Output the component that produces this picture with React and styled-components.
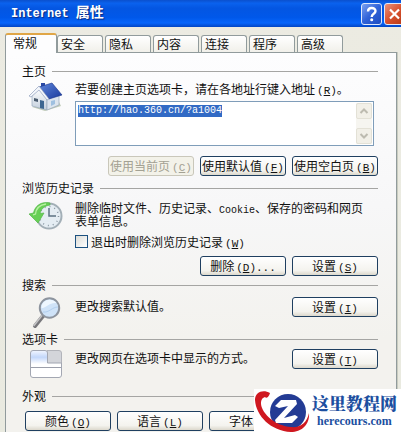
import React, { useEffect, useRef } from "react";
import styled, { createGlobalStyle, css } from "styled-components";

const GlobalStyle = createGlobalStyle`
  * { box-sizing: border-box; }
  html, body { margin: 0; overflow: hidden; }
  body, button, textarea {
    font-family: "Noto Sans CJK SC", sans-serif;
    font-size: 12px;
    line-height: 14px;
    color: #111;
  }
  h1, h2, p { margin: 0; font-size: inherit; font-weight: 400; }
`;

const Dialog = styled.main`
  display: flex;
  flex-direction: column;
  height: 100vh;
  overflow: hidden;
  background: linear-gradient(#ecebe2, #e9eae0);
`;

const TitleBar = styled.header`
  display: flex;
  align-items: center;
  flex: none;
  height: 27px;
  padding-left: 11px;
  overflow: hidden;
  background: linear-gradient(#0b50cd 0%, #0a62ee 12%, #0456e2 30%, #0058ea 65%, #0765fb 85%, #0245c4 100%);
`;

const Title = styled.h1`
  flex: 1;
  font: 700 12px/20px "Liberation Mono", "Noto Sans CJK SC", monospace;
  color: #fff;
  text-shadow: 1px 1px 1px #0a2a80;
  white-space: pre;
`;

const TitleCn = styled.span`
  font-size: 14px;
`;

const Controls = styled.div`
  display: flex;
  gap: 2px;
  margin-right: -4px;
`;

const ControlButton = styled.button`
  width: 21px;
  height: 22px;
  padding: 0;
  border: 1px solid #dfe8fb;
  border-radius: 3px;
  background: ${(p) =>
    p.$close
      ? "linear-gradient(135deg, #e9927b, #d8502d 50%, #b53a17)"
      : "linear-gradient(135deg, #7aa0f0, #2f62d8 50%, #1d4cc0)"};

  svg { display: block; margin: auto; }
`;

const Tabs = styled.div`
  display: flex;
  align-items: flex-end;
  gap: 2px;
  flex: none;
  height: 25px;
  padding-left: 5px;
`;

const Tab = styled.button`
  width: 46px;
  height: 17px;
  padding: 0 0 0 3px;
  text-align: left;
  border: 1px solid #919b9c;
  border-bottom: 0;
  border-radius: 3px 3px 0 0;
  background: linear-gradient(#fff, #f1f0ea);

  ${(p) =>
    p.$active &&
    css`
      z-index: 1;
      width: 52px;
      height: 20px;
      margin-right: -2px;
      margin-bottom: -1px;
      padding: 0 0 2px 7px;
      border-top: 2px solid #e0a647;
      background: #fdfdfe;
    `}
`;

const Panel = styled.div`
  flex: 1;
  margin: 0 4px 0 5px;
  padding: 11px 18px 0 16px;
  border: solid #919b9c;
  border-width: 1px 1px 0;
  background: linear-gradient(#fdfdfe, #f7f7f8 40%, #f3f2ee 75%);
  box-shadow: 1px 0 #c9ccc0;
`;

const Section = styled.section`
  margin-bottom: ${(p) => p.$after || 0}px;
`;

const Heading = styled.h2`
  display: flex;
  align-items: center;
  gap: 6px;
  line-height: 14px;

  &::after {
    content: "";
    flex: 1;
    height: 1px;
    background: #a5a5a3;
  }
`;

const Body = styled.div`
  display: grid;
  grid-template-columns: 53px 1fr;
  padding-top: ${(p) => p.$top}px;
`;

const IconCell = styled.div`
  padding-left: 7px;
  svg { display: block; }
`;

const SettingLine = styled.div`
  display: flex;
  justify-content: space-between;
  align-items: flex-start;
`;

const SettingText = styled.p`
  padding-top: 2px;
`;

const Description = styled.p`
  line-height: 13px;
`;

const HomeLabel = styled.label`
  display: block;
`;

const AddressBox = styled.div`
  display: flex;
  height: 45px;
  margin: 5px 4px 0 0;
  padding: 1px;
  border: 1px solid #7f9db9;
  background: #fff;
`;

const Address = styled.textarea`
  flex: 1;
  min-width: 0;
  padding: 2px 0 0 1px;
  border: 0;
  outline: 0;
  resize: none;
  overflow: hidden;
  background: transparent;
  font: 10px/12px "Liberation Mono", monospace;

  &::selection {
    background: #316ac5;
    color: #fff;
  }
`;

const ScrollTrack = styled.div`
  display: flex;
  flex-direction: column;
  justify-content: space-between;
  width: 16px;
  background: #f6f5f0;
`;

const ScrollArrow = styled.span`
  display: grid;
  place-items: center;
  height: 16px;
  border: 1px solid #e3e1d6;
  border-radius: 2px;
  background: #f2f0e8;
`;

const ButtonRow = styled.div`
  display: flex;
  justify-content: ${(p) => (p.$start ? "flex-start" : "flex-end")};
  gap: ${(p) => p.$gap || 6}px;
  padding: ${(p) => p.$top}px 0 0 ${(p) => p.$left || 0}px;
`;

const PushButton = styled.button`
  flex: none;
  width: 86px;
  height: 20px;
  padding: 0;
  border: 1px solid #1f3f60;
  border-radius: 3px;
  background: linear-gradient(#fff, #f4f3ee 75%, #dcd8cc);
  line-height: 16px;
  white-space: nowrap;

  &:disabled {
    border-color: #c9c7ba;
    background: #f3f2e9;
    color: #a3a193;
  }
`;

const CheckLabel = styled.label`
  display: flex;
  align-items: center;
  gap: 3px;
  height: 13px;
  margin-top: 8px;
`;

const Check = styled.input`
  appearance: none;
  width: 13px;
  height: 13px;
  margin: 0;
  border: 1px solid #1c5180;
  background: linear-gradient(135deg, #dcdcd7, #fff);
`;

const Latin = styled.span`
  font: 10px/1px "Liberation Mono", monospace;
`;

const Key = styled(Latin)`
  margin-left: 2px;
  font-size: 11px;
`;

const Watermark = styled.aside`
  position: fixed;
  right: 0;
  bottom: 0;
  display: flex;
  align-items: center;
  width: 147px;
  height: 43px;
  background: #fff;
  color: #1c4fa0;

  svg { flex: none; }
`;

const Brand = styled.div`
  display: flex;
  flex-direction: column;
  align-items: center;
  white-space: nowrap;
`;

const BrandName = styled.strong`
  font: 900 17px/20px "Noto Serif CJK SC", "Noto Sans CJK SC", serif;
`;

const BrandSite = styled.strong`
  font: 700 12px/16px "Liberation Serif", serif;
`;

function Accel({ k, after }) {
  return (
    <Key>
      (<u>{k}</u>){after}
    </Key>
  );
}

function HouseIcon() {
  return (
    <svg width="34" height="30" viewBox="0 0 34 30" aria-hidden="true">
      <defs>
        <linearGradient id="roof" x1="0" y1="0" x2="1" y2="1">
          <stop offset="0" stopColor="#5f86dc" />
          <stop offset="1" stopColor="#1a3a9c" />
        </linearGradient>
        <linearGradient id="wall" x1="0" y1="0" x2="0" y2="1">
          <stop offset="0" stopColor="#ffffff" />
          <stop offset="1" stopColor="#c3cfdd" />
        </linearGradient>
      </defs>
      <path d="M3 25 L16 29 L32 24 L30 20Z" fill="#a8b79a" opacity=".7" />
      <path d="M3 14 L10 6 L18 17 L18 28 L3 24Z" fill="url(#wall)" stroke="#9aa9bb" strokeWidth=".7" />
      <path d="M18 17 L30 13 L30 23 L18 28Z" fill="#dde5ee" stroke="#9aa9bb" strokeWidth=".7" />
      <path d="M12 6 V1 H16 V5Z" fill="#2a49a5" />
      <path d="M10 5 L23 1 L33 13 L20 17Z" fill="url(#roof)" stroke="#15308a" strokeWidth=".6" />
      <path d="M10 4 L0 14 L2 15 L10 8 L18 18 L20 17Z" fill="#f3f6fb" stroke="#8192b5" strokeWidth=".6" />
      <path d="M5 16 L9 17 V20 L5 19Z" fill="#4a5c70" />
      <path d="M11 18 L15 19 V27 L11 26Z" fill="#3e6791" />
      <path d="M22 19 L26 18 V22 L22 24Z" fill="#9fc0e0" />
    </svg>
  );
}

function HistoryIcon() {
  return (
    <svg width="34" height="30" viewBox="0 0 34 30" aria-hidden="true">
      <circle cx="20" cy="15" r="12.5" fill="#e5edf3" stroke="#a3afb7" strokeWidth="2" />
      <circle cx="20" cy="15" r="9.5" fill="none" stroke="#8795a0" strokeWidth="1.5" strokeDasharray="1 4" />
      <path d="M20 7 V15 H27" fill="none" stroke="#5c7182" strokeWidth="1.5" />
      <path d="M21 2 C12 0 6 5 4.500 12 L0 13 L9 22 L15 12 L11 12.500 C12 8 15 5 21 4Z" fill="#67cf55" stroke="#55b64b" strokeWidth=".7" />
      <path d="M17 3 C10 4 7 8 6.500 13 L4 13.800" fill="none" stroke="#b7f0a2" strokeWidth="1.300" />
    </svg>
  );
}

function SearchIcon() {
  return (
    <svg width="34" height="32" viewBox="0 0 34 32" aria-hidden="true">
      <path d="M6 29 L14 19" stroke="#77777b" strokeWidth="4" strokeLinecap="round" />
      <path d="M5 28.500 L13 18.500" stroke="#c4c4c6" strokeWidth="1.500" strokeLinecap="round" />
      <circle cx="20.500" cy="11" r="9.700" fill="#cfe3f8" stroke="#8d949e" strokeWidth="2" />
      <path d="M12.500 11 C17 11 21 5 27.500 6 C22 0 12.500 3 12.500 11Z" fill="#eef7ff" />
      <path d="M14 15 C20 16 23 10 29 10" stroke="#b1cfef" fill="none" />
    </svg>
  );
}

function TabsIcon() {
  return (
    <svg width="34" height="30" viewBox="0 0 34 30" aria-hidden="true">
      <defs>
        <linearGradient id="tabFill" x1="0" y1="0" x2="0" y2="1">
          <stop offset="0" stopColor="#f2f6ff" />
          <stop offset=".25" stopColor="#c3d7fa" />
          <stop offset=".5" stopColor="#fff" />
        </linearGradient>
      </defs>
      <path d="M18 1.500 H30 Q32.500 1.500 32.500 4 V15 H18Z" fill="#d3d5da" stroke="#b2b4ba" />
      <path d="M1.500 4 Q1.500 1.500 4 1.500 H16 Q18.500 1.500 18.500 4 V14 H32.500 V26 Q32.500 28.500 30 28.500 H4 Q1.500 28.500 1.500 26Z" fill="url(#tabFill)" stroke="#a3a7b2" />
      <path d="M2 18.500 H32" fill="none" stroke="#9b9fab" />
    </svg>
  );
}

function LogoIcon() {
  return (
    <svg width="58" height="43" viewBox="0 0 58 43" aria-hidden="true">
      <circle cx="34" cy="23" r="18" fill="#233b94" />
      <path d="M16 4 C9 0 1 3 1 11 C2 27 17 42 37 43 C47 43 56 36 55 24 C53 34 46 39 37 38 C22 37 8 25 7 15 C7 11 8 9 11 8 C12 10 15 8 16 4Z" fill="#cf1820" />
      <path d="M21 17 L27 11 L42 11 L43 15 L30 29 L41 26 L44 28 L38 34 L22 34 L21 31 L34 17 L25 19Z" fill="#fff" />
    </svg>
  );
}

function Chevron({ down }) {
  return (
    <svg width="10" height="8" viewBox="0 0 10 8" aria-hidden="true">
      <path d={down ? "M1.500 2 L5 5.500 L8.500 2" : "M1.500 6 L5 2.500 L8.500 6"} fill="none" stroke="#bdbbb0" strokeWidth="2" />
    </svg>
  );
}

const tabNames = ["常规", "安全", "隐私", "内容", "连接", "程序", "高级"];

export default function App() {
  const address = useRef(null);

  useEffect(() => {
    address.current.focus();
    address.current.select();
  }, []);

  return (
    <>
      <GlobalStyle />
      <Dialog>
        <TitleBar>
          <Title>
            Internet <TitleCn>属性</TitleCn>
          </Title>
          <Controls>
            <ControlButton aria-label="帮助">
              <svg width="19" height="20" viewBox="0 0 19 20">
                <path d="M6 7.500 C6 3 13.500 3 13.500 7 C13.500 10 9.700 9.500 9.700 13" fill="none" stroke="#fff" strokeWidth="2.400" />
                <circle cx="9.700" cy="15.700" r="1.500" fill="#fff" />
              </svg>
            </ControlButton>
            <ControlButton $close aria-label="关闭">
              <svg width="19" height="20" viewBox="0 0 19 20">
                <path d="M5 5.500 L14 14.500 M14 5.500 L5 14.500" stroke="#fff" strokeWidth="2.200" />
              </svg>
            </ControlButton>
          </Controls>
        </TitleBar>

        <Tabs role="tablist">
          {tabNames.map((name, i) => (
            <Tab key={name} role="tab" aria-selected={i === 0} $active={i === 0}>
              {name}
            </Tab>
          ))}
        </Tabs>

        <Panel role="tabpanel">
          <Section $after={5}>
            <Heading>主页</Heading>
            <Body $top={4}>
              <IconCell><HouseIcon /></IconCell>
              <div>
                <HomeLabel htmlFor="address">
                  若要创建主页选项卡，请在各地址行键入地址<Accel k="R" />。
                </HomeLabel>
                <AddressBox>
                  <Address id="address" ref={address} defaultValue="http://hao.360.cn/?a1004" spellCheck={false} />
                  <ScrollTrack aria-hidden="true">
                    <ScrollArrow><Chevron /></ScrollArrow>
                    <ScrollArrow><Chevron down /></ScrollArrow>
                  </ScrollTrack>
                </AddressBox>
              </div>
            </Body>
            <ButtonRow $top={10}>
              <PushButton disabled>使用当前页<Accel k="C" /></PushButton>
              <PushButton>使用默认值<Accel k="F" /></PushButton>
              <PushButton>使用空白页<Accel k="B" /></PushButton>
            </ButtonRow>
          </Section>

          <Section $after={2}>
            <Heading>浏览历史记录</Heading>
            <Body $top={6}>
              <IconCell><HistoryIcon /></IconCell>
              <div>
                <Description>
                  删除临时文件、历史记录、<Latin>Cookie</Latin>、保存的密码和网页
                  <br />
                  表单信息。
                </Description>
                <CheckLabel>
                  <Check type="checkbox" />
                  <span>退出时删除浏览历史记录<Accel k="W" /></span>
                </CheckLabel>
              </div>
            </Body>
            <ButtonRow $top={8}>
              <PushButton>删除<Accel k="D" after="..." /></PushButton>
              <PushButton>设置<Accel k="S" /></PushButton>
            </ButtonRow>
          </Section>

          <Section $after={3}>
            <Heading>搜索</Heading>
            <Body $top={5}>
              <IconCell><SearchIcon /></IconCell>
              <SettingLine>
                <SettingText>更改搜索默认值。</SettingText>
                <PushButton>设置<Accel k="I" /></PushButton>
              </SettingLine>
            </Body>
          </Section>

          <Section $after={10}>
            <Heading>选项卡</Heading>
            <Body $top={3}>
              <IconCell><TabsIcon /></IconCell>
              <SettingLine>
                <SettingText>更改网页在选项卡中显示的方式。</SettingText>
                <PushButton>设置<Accel k="T" /></PushButton>
              </SettingLine>
            </Body>
          </Section>

          <Section>
            <Heading>外观</Heading>
            <ButtonRow $start $top={8} $left={3} $gap={6}>
              <PushButton>颜色<Accel k="O" /></PushButton>
              <PushButton>语言<Accel k="L" /></PushButton>
              <PushButton>字体<Accel k="N" /></PushButton>
            </ButtonRow>
          </Section>
        </Panel>
      </Dialog>

      <Watermark>
        <LogoIcon />
        <Brand>
          <BrandName>这里教程网</BrandName>
          <BrandSite>herecours.com</BrandSite>
        </Brand>
      </Watermark>
    </>
  );
}
